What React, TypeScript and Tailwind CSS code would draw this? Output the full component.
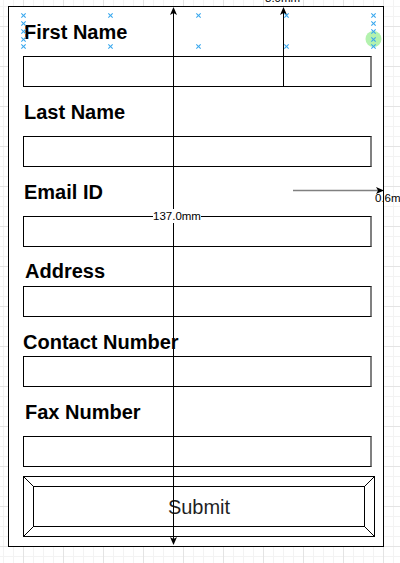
import React from "react";

const labelCls =
  "h-[23px] leading-[23px] text-[20px] font-bold text-black whitespace-nowrap";
const inputCls =
  "ml-[14px] w-[349px] h-[31px] border border-black border-r-2 border-r-[#808080] bg-white";

function Marker({ x, y }: { x: number; y: number }) {
  return (
    <g stroke="#3aa8ee" strokeWidth={1.1}>
      <line x1={x - 2.2} y1={y - 2.2} x2={x + 2.2} y2={y + 2.2} />
      <line x1={x - 2.2} y1={y + 2.2} x2={x + 2.2} y2={y - 2.2} />
    </g>
  );
}

export default function App() {
  const markers: [number, number][] = [
    [23.5, 15.5],
    [23.5, 23.5],
    [23.5, 31.5],
    [23.5, 39.5],
    [23.5, 46.5],
    [110.5, 15.5],
    [110.5, 46.5],
    [198.5, 15.5],
    [198.5, 46.5],
    [286.5, 15.5],
    [286.5, 46.5],
    [373.5, 15.5],
    [373.5, 23.5],
    [373.5, 31.5],
    [373.5, 39.5],
    [373.5, 46.5],
  ];
  return (
    <div className="relative w-[400px] h-[563px] overflow-hidden bg-white pt-[6px] pl-[8px] font-['Liberation_Sans',Arial,sans-serif]">
      {/* canvas grid */}
      <svg className="absolute inset-0 pointer-events-none" width="400" height="563">
        <defs>
          <pattern id="grid" x="23" y="26" width="40" height="40" patternUnits="userSpaceOnUse">
            <g stroke="#f3f3f3" strokeWidth="1">
              <line x1="10.5" y1="0" x2="10.5" y2="40" />
              <line x1="20.5" y1="0" x2="20.5" y2="40" />
              <line x1="30.5" y1="0" x2="30.5" y2="40" />
              <line x1="0" y1="10.5" x2="40" y2="10.5" />
              <line x1="0" y1="20.5" x2="40" y2="20.5" />
              <line x1="0" y1="30.5" x2="40" y2="30.5" />
            </g>
            <g stroke="#e4e4e4" strokeWidth="1">
              <line x1="0.5" y1="0" x2="0.5" y2="40" />
              <line x1="0" y1="0.5" x2="40" y2="0.5" />
            </g>
          </pattern>
        </defs>
        <rect width="400" height="563" fill="url(#grid)" />
      </svg>

      {/* form frame */}
      <div className="relative w-[376px] h-[541px] border border-black bg-white">
        <div className={`mt-[14px] ml-[15px] ${labelCls}`}>First Name</div>
        <div className={`mt-[12px] ${inputCls}`} />

        <div className={`mt-[14px] ml-[15px] ${labelCls}`}>Last Name</div>
        <div className={`mt-[12px] ${inputCls}`} />

        <div className={`mt-[14px] ml-[15px] ${labelCls}`}>Email ID</div>
        <div className={`mt-[12px] ${inputCls}`} />

        <div className={`mt-[13px] ml-[16px] ${labelCls}`}>Address</div>
        <div className={`mt-[3px] ${inputCls}`} />

        <div className={`mt-[14px] ml-[14px] ${labelCls}`}>Contact Number</div>
        <div className={`mt-[2px] ${inputCls}`} />

        <div className={`mt-[14px] ml-[16px] ${labelCls}`}>Fax Number</div>
        <div className={`mt-[12px] ${inputCls}`} />

        <div className="relative mt-[9px] ml-[14px] w-[352px] h-[61px] border border-black p-[9px]">
          <svg className="absolute -left-px -top-px pointer-events-none" width="352" height="61">
            <g stroke="#000" strokeWidth="1">
              <line x1="0.5" y1="0.5" x2="10.5" y2="10.5" />
              <line x1="351.5" y1="0.5" x2="341.5" y2="10.5" />
              <line x1="0.5" y1="60.5" x2="10.5" y2="50.5" />
              <line x1="351.5" y1="60.5" x2="341.5" y2="50.5" />
            </g>
          </svg>
          <div className="w-full h-full border border-black flex items-center justify-center text-[20px] text-[#1f1f1f]">
            Submit
          </div>
        </div>
      </div>

      {/* dimension overlays */}
      <svg className="absolute inset-0 pointer-events-none" width="400" height="563">
        <line x1="173.5" y1="12" x2="173.5" y2="540" stroke="#000" strokeWidth="1" />
        <polygon points="173.5,7 170,15 173.5,13 177,15" fill="#000" />
        <polygon points="173.5,545 170,537 173.5,539 177,537" fill="#000" />
        <line x1="283.5" y1="12" x2="283.5" y2="86" stroke="#000" strokeWidth="1" />
        <polygon points="283.5,7 280,15 283.5,13 287,15" fill="#000" />
        <line x1="293" y1="190.5" x2="379" y2="190.5" stroke="#808080" strokeWidth="1.3" />
        <polygon points="384,190.5 376,187 378,190.5 376,194" fill="#000" />
        <circle cx="373.5" cy="39" r="8" fill="#a6f0a0" opacity="0.85" />
        {markers.map(([x, y], i) => (
          <Marker key={i} x={x} y={y} />
        ))}
      </svg>

      <div className="absolute left-[153px] top-[209px] h-[14px] leading-[14px] bg-white text-[11.5px] text-black whitespace-nowrap">
        137.0mm
      </div>
      <div className="absolute left-[265px] top-[-9px] h-[14px] leading-[14px] bg-white text-[11.5px] text-black whitespace-nowrap">
        8.0mm
      </div>
      <div className="absolute left-[375px] top-[191px] h-[14px] leading-[14px] text-[11.5px] text-black whitespace-nowrap">
        0.6mm
      </div>
    </div>
  );
}
